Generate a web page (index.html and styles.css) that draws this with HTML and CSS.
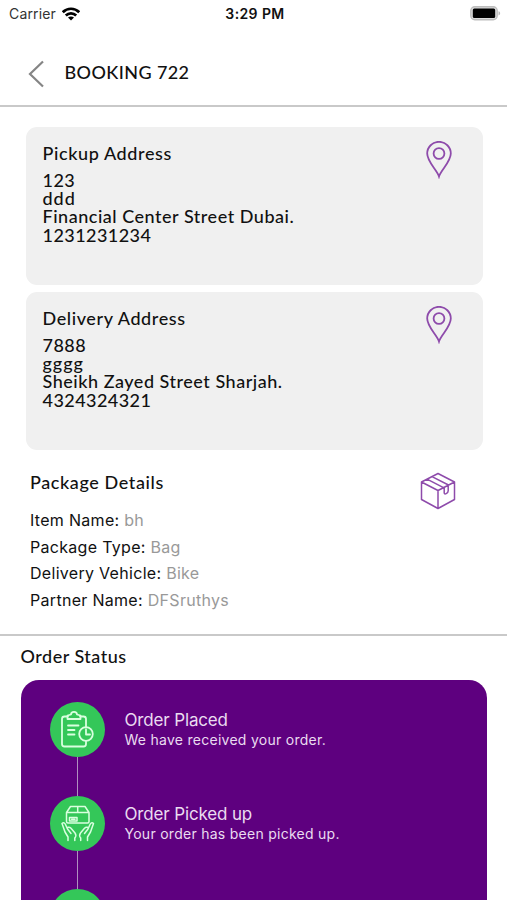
FILE: index.html
```html
<!DOCTYPE html>
<html lang="en">
<head>
<meta charset="utf-8">
<title>Booking 722</title>
<link rel="stylesheet" href="styles.css">
</head>
<body>
<div class="screen">
  <div class="status-bar">
    <div class="carrier"><span class="carrier-name">Carrier</span>
      <svg class="wifi" width="18" height="14" viewBox="0 0 18 14"><g fill="none" stroke="#000" stroke-width="2.7"><path d="M.8 5.2C5.4.6 12.6.6 17.2 5.2"/><path d="M3.8 8.5c2.9-2.900 7.5-2.900 10.4 0"/></g><path d="M9 13.600 6 10.600c1.700-1.500 4.300-1.500 6 0z"/></svg>
    </div>
    <div class="clock">3:29 PM</div>
    <svg class="battery" width="31" height="15" viewBox="0 0 31 15"><rect x=".8" y=".8" width="26.4" height="13" rx="4" fill="#ddd" stroke="#bdbdbd" stroke-width="1.4"/><rect x="2.8" y="2.6" width="22.4" height="9.4" rx="1.5"/><path d="M28.500 5.200c2.200.7 2.200 3.500 0 4.200z" fill="#b8b8b8"/></svg>
  </div>
  <header class="nav">
    <svg class="back" width="17" height="28" viewBox="0 0 17 28"><path d="M15 1.500 2 14l13 12.500" fill="none" stroke="#858585" stroke-width="2.200"/></svg>
    <h1 class="nav-title">BOOKING 722</h1>
  </header>
  <section class="cards">
    <article class="card">
      <div>
        <h2 class="heading">Pickup Address</h2>
        <div class="address"><p>123</p><p class="short">ddd</p><p class="street">Financial Center Street Dubai.</p><p>1231231234</p></div>
      </div>
      <svg class="pin" width="26" height="38" viewBox="0 0 26 38"><g fill="none" stroke="#8e4bab" stroke-width="1.800"><path d="M13 35.500C11 29 1.200 21 1.200 12.600a11.800 11.800 0 0 1 23.600 0C24.800 21 15 29 13 35.500z"/><circle cx="13" cy="12.500" r="5.400"/></g></svg>
    </article>
    <article class="card">
      <div>
        <h2 class="heading">Delivery Address</h2>
        <div class="address"><p>7888</p><p class="short">gggg</p><p class="street">Sheikh Zayed Street Sharjah.</p><p>4324324321</p></div>
      </div>
      <svg class="pin" width="26" height="38" viewBox="0 0 26 38"><g fill="none" stroke="#8e4bab" stroke-width="1.800"><path d="M13 35.500C11 29 1.200 21 1.200 12.600a11.800 11.800 0 0 1 23.600 0C24.800 21 15 29 13 35.500z"/><circle cx="13" cy="12.500" r="5.400"/></g></svg>
    </article>
  </section>
  <section class="package">
    <div>
      <h2 class="heading">Package Details</h2>
      <dl class="details">
        <div><dt>Item Name:</dt> <dd>bh</dd></div>
        <div><dt>Package Type:</dt> <dd>Bag</dd></div>
        <div><dt>Delivery Vehicle:</dt> <dd>Bike</dd></div>
        <div><dt>Partner Name:</dt> <dd>DFSruthys</dd></div>
      </dl>
    </div>
    <svg class="box" width="36" height="38" viewBox="0 0 36 38"><g fill="none" stroke="#8e4bab" stroke-width="1.500" stroke-linejoin="round"><path d="M18 1.500 34.500 10v17.500L18 36.500l-16.500-9V10zM1.500 10 18 18.500 34.500 10M18 18.500v18M12 4.600 28.500 13M7 7.200 23.500 15.700M24.200 15.500v5.300q0 1.700 2 .8t2-2.800V13"/></g></svg>
  </section>
  <section class="status">
    <h2 class="heading">Order Status</h2>
    <div class="timeline">
      <div class="step">
        <div class="rail"><div class="dot">
          <svg width="55" height="55" viewBox="0 0 55 55"><g fill="none" stroke="#d9ffdf" stroke-width="1.800" stroke-linecap="round" stroke-linejoin="round"><path d="M18 14.500h-3.500c-1.500 0-2.500 1-2.500 2.500v25c0 1.500 1 2.500 2.500 2.500h19c1.500 0 2.500-1 2.500-2.500v-2.500M36 25.500V17c0-1.500-1-2.500-2.500-2.500H30M17.500 17v-3.500l3.500-1c0-3.500 6-3.500 6 0l3.500 1V17zM18 23.500h10.500M18 28h6.500M18 32.500h6.500"/><circle cx="36" cy="32" r="6.800"/><path d="M36 27.500V32.500h4"/></g></svg>
        </div></div>
        <div class="step-text"><h3>Order Placed</h3><p>We have received your order.</p></div>
      </div>
      <div class="step">
        <div class="rail"><div class="dot">
          <svg width="55" height="55" viewBox="0 0 55 55"><g fill="none" stroke="#d9ffdf" stroke-width="1.500" stroke-linecap="round" stroke-linejoin="round"><path d="M16.500 16.500v9c0 1 .6 1.500 1.500 1.500h19.500c1 0 1.500-.5 1.500-1.500v-9zM16.500 16.500l4-6H35l4 6M27.700 10.500v6M19.500 21.500H27V25h-7.500zM21.500 23.300h3.500"/><path d="M18 44.500v-3.500l-3-5-3-8.500c1.500-1.500 2.800-.5 3.500 1l2 4.500 3.500 4.500M17.500 33c-.8-2 1.800-2.500 3.500-.8l4 4.800c1.200 1.600.6 4-.2 5v2.500"/><path d="M37.500 44.500v-3.500l3-5 3-8.500c-1.500-1.500-2.800-.5-3.500 1l-2 4.500-3.500 4.500M38 33c.8-2-1.800-2.500-3.500-.8l-4 4.800c-1.200 1.600-.6 4 .2 5v2.500"/></g></svg>
        </div></div>
        <div class="step-text"><h3>Order Picked up</h3><p>Your order has been picked up.</p></div>
      </div>
      <div class="step"><div class="rail"><div class="dot"></div></div></div>
    </div>
  </section>
</div>
</body>
</html>
```
FILE: styles.css
```css
* { box-sizing: border-box; margin: 0; padding: 0; }
body { background: #fff; color: #111; font-family: Inter, sans-serif; overflow: hidden; }
.screen { width: 507px; height: 900px; overflow: hidden; display: flex; flex-direction: column; }
.status-bar { height: 28px; flex: none; display: grid; grid-template-columns: 1fr auto 1fr; align-items: center; padding: 0 6px 1px 9px; }
.carrier { display: flex; align-items: center; gap: 6px; font-size: 14px; color: #333; }
.carrier-name { letter-spacing: .15px; }
.clock { font-size: 14px; font-weight: 600; letter-spacing: .4px; }
.battery { justify-self: end; }
.nav { height: 78.500px; flex: none; display: flex; align-items: flex-start; padding: 32px 0 0 28px; gap: 19.500px; border-bottom: 2px solid #c9c9c9; }
.nav-title, .heading, .address { font-family: Lato, sans-serif; font-weight: 500; font-size: 18px; line-height: 24px; white-space: nowrap; letter-spacing: .6px; }
.nav-title { letter-spacing: .4px; }
.cards { flex: none; display: flex; flex-direction: column; gap: 6.500px; padding: 20px 24.500px 0 25.500px; }
.card { height: 158.500px; border-radius: 11px; background: #f0f0f0; display: flex; justify-content: space-between; padding: 14px 31px 0 17px; }
.address { line-height: 18.400px; margin-top: 6px; letter-spacing: .45px; }
.address .short { letter-spacing: 1px; }
.address .street { letter-spacing: .52px; }
.package { flex: none; height: 186px; display: flex; justify-content: space-between; padding: 20px 51px 0 30px; border-bottom: 2px solid #c9c9c9; }
.box { margin-top: 1.500px; }
.details { margin-top: 13px; font-size: 16px; line-height: 26.600px; letter-spacing: .3px; }
dt, dd { display: inline; }
dd { color: #999; }
.status { flex: 1; display: flex; flex-direction: column; padding: 8px 20px 0 20.500px; }
.status .heading { letter-spacing: .5px; }
.timeline { flex: none; height: 300px; margin-top: 12px; border-radius: 18px; background: #5e007f; padding: 22px 0 0 29px; }
.step { display: flex; gap: 20px; height: 93.700px; color: #eadcf0; }
.rail { width: 55px; display: flex; flex-direction: column; align-items: center; }
.rail::after { content: ""; width: 1px; flex: 1; background: #b08fc0; }
.dot { width: 55px; height: 55px; border-radius: 50%; background: #34c759; flex: none; }
.step-text { padding-top: 8px; white-space: nowrap; }
.step-text h3 { font-size: 17px; font-weight: 400; line-height: 21px; letter-spacing: -.15px; }
.step-text p { font-size: 14px; line-height: 18px; letter-spacing: .27px; }
```
